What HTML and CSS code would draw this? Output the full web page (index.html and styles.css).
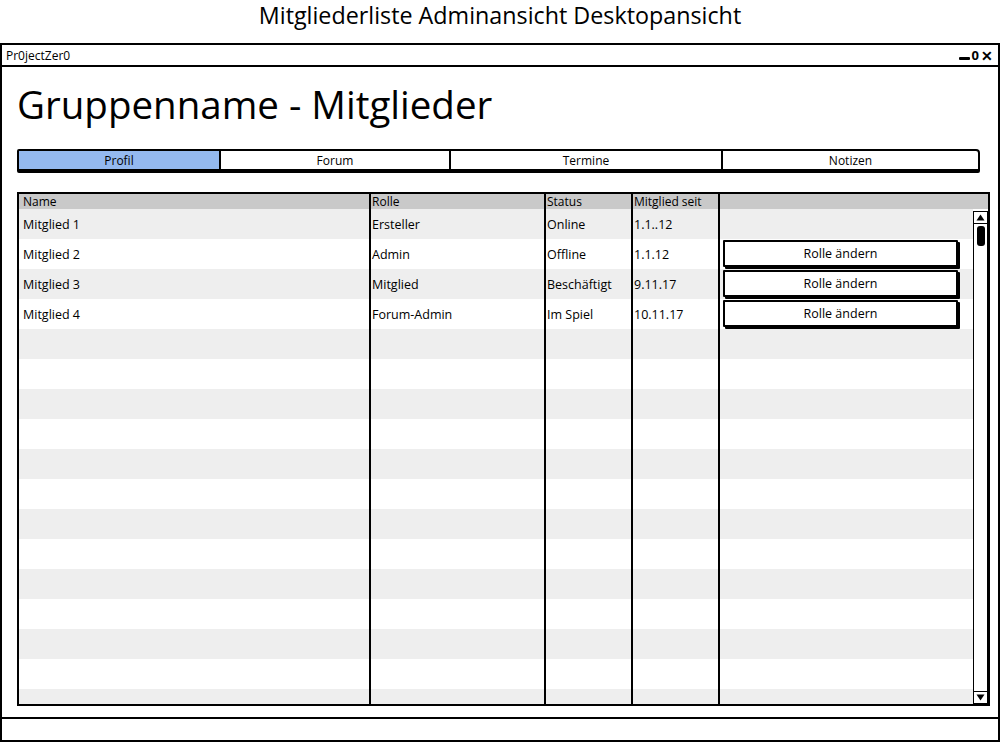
FILE: index.html
```html
<!DOCTYPE html>
<html lang="de">
<head>
<meta charset="utf-8">
<title>Mitgliederliste Adminansicht Desktopansicht</title>
<link rel="stylesheet" href="styles.css">
</head>
<body>
<div class="page-title">Mitgliederliste Adminansicht Desktopansicht</div>
<div class="window">
  <div class="titlebar">
    <span class="app-name">Pr0jectZer0</span>
    <span class="controls"><span class="ctl-min"></span><span class="ctl-max">0</span><span class="ctl-close">✕</span></span>
  </div>
  <div class="content">
    <h1 class="heading">Gruppenname - Mitglieder</h1>
    <div class="tabs">
      <div class="tab tab-active t1">Profil</div>
      <div class="tab t2">Forum</div>
      <div class="tab t3">Termine</div>
      <div class="tab t4">Notizen</div>
    </div>
    <div class="table">
      <div class="thead">
        <div class="th first">Name</div>
        <div class="th">Rolle</div>
        <div class="th">Status</div>
        <div class="th">Mitglied seit</div>
        <div class="th last"></div>
      </div>
      <div class="tbody">
        <div class="rows">
          <div class="row"><div class="td first">Mitglied 1</div><div class="td">Ersteller</div><div class="td">Online</div><div class="td">1.1..12</div><div class="td last"></div></div>
          <div class="row"><div class="td first">Mitglied 2</div><div class="td">Admin</div><div class="td">Offline</div><div class="td">1.1.12</div><div class="td last"><button class="btn">Rolle ändern</button></div></div>
          <div class="row"><div class="td first">Mitglied 3</div><div class="td">Mitglied</div><div class="td">Beschäftigt</div><div class="td">9.11.17</div><div class="td last"><button class="btn">Rolle ändern</button></div></div>
          <div class="row"><div class="td first">Mitglied 4</div><div class="td">Forum-Admin</div><div class="td">Im Spiel</div><div class="td">10.11.17</div><div class="td last"><button class="btn">Rolle ändern</button></div></div>
          <div class="row"><div class="td first"></div><div class="td"></div><div class="td"></div><div class="td"></div><div class="td last"></div></div>
          <div class="row"><div class="td first"></div><div class="td"></div><div class="td"></div><div class="td"></div><div class="td last"></div></div>
          <div class="row"><div class="td first"></div><div class="td"></div><div class="td"></div><div class="td"></div><div class="td last"></div></div>
          <div class="row"><div class="td first"></div><div class="td"></div><div class="td"></div><div class="td"></div><div class="td last"></div></div>
          <div class="row"><div class="td first"></div><div class="td"></div><div class="td"></div><div class="td"></div><div class="td last"></div></div>
          <div class="row"><div class="td first"></div><div class="td"></div><div class="td"></div><div class="td"></div><div class="td last"></div></div>
          <div class="row"><div class="td first"></div><div class="td"></div><div class="td"></div><div class="td"></div><div class="td last"></div></div>
          <div class="row"><div class="td first"></div><div class="td"></div><div class="td"></div><div class="td"></div><div class="td last"></div></div>
          <div class="row"><div class="td first"></div><div class="td"></div><div class="td"></div><div class="td"></div><div class="td last"></div></div>
          <div class="row"><div class="td first"></div><div class="td"></div><div class="td"></div><div class="td"></div><div class="td last"></div></div>
          <div class="row"><div class="td first"></div><div class="td"></div><div class="td"></div><div class="td"></div><div class="td last"></div></div>
          <div class="row"><div class="td first"></div><div class="td"></div><div class="td"></div><div class="td"></div><div class="td last"></div></div>
          <div class="row"><div class="td first"></div><div class="td"></div><div class="td"></div><div class="td"></div><div class="td last"></div></div>
        </div>
        <div class="scrollbar">
          <div class="sb-up"><svg width="9" height="7" viewBox="0 0 9 7"><path d="M0.5 6.5 L4.5 0.5 L8.5 6.5 Z" fill="#000"/></svg></div>
          <div class="sb-thumb"></div>
          <div class="sb-track"></div>
          <div class="sb-down"><svg width="9" height="7" viewBox="0 0 9 7"><path d="M0.5 0.5 L4.5 6.5 L8.5 0.5 Z" fill="#000"/></svg></div>
        </div>
      </div>
    </div>
  </div>
  <div class="statusbar"></div>
</div>
</body>
</html>
```
FILE: styles.css
```css
* { box-sizing: border-box; }
html, body { margin: 0; padding: 0; background: #fff; }
body {
  font-family: "Open Sans", "Liberation Sans", sans-serif;
  color: #000;
  width: 1000px;
  height: 742px;
  overflow: hidden;
}
.page-title {
  height: 43px;
  line-height: 30px;
  text-align: center;
  font-size: 23.3px;
}
.window {
  height: 699px;
  border: 2px solid #000;
  display: flex;
  flex-direction: column;
}
.titlebar {
  height: 22px;
  border-bottom: 2px solid #000;
  display: flex;
  align-items: center;
  justify-content: space-between;
  padding: 0 5px 0 4px;
}
.app-name { font-size: 12px; }
.controls { display: flex; align-items: center; gap: 2px; font-weight: bold; font-size: 13px; }
.ctl-min { width: 11px; height: 3px; background: #000; margin-top: 7px; border-radius: 1px; }
.ctl-max { font-size: 13px; }
.ctl-close { font-size: 14px; }
.content {
  flex: 1;
  padding: 14px 7px 0 15px;
  display: flex;
  flex-direction: column;
}
.heading {
  margin: 0 0 21px 0;
  height: 47px;
  line-height: 47px;
  font-size: 38.5px;
  font-weight: normal;
}
.tabs {
  display: flex;
  width: 963px;
  height: 24px;
  border: 2px solid #000;
  border-bottom-width: 4px;
  border-radius: 2px 4px 2px 2px;
}
.tab {
  display: flex;
  align-items: center;
  justify-content: center;
  font-size: 12px;
  border-right: 2px solid #000;
}
.tab:last-child { border-right: none; }
.t1 { width: 202px; }
.t2 { width: 230px; }
.t3 { width: 272px; }
.t4 { flex: 1; }
.tab-active { background: #94b9ef; }
.table {
  margin-top: 19px;
  width: 973px;
  height: 514px;
  border: 2px solid #000;
  display: flex;
  flex-direction: column;
}
.thead {
  display: grid;
  grid-template-columns: 352px 175px 87px 87px 1fr;
  height: 15px;
  background: #c9c9c9;
}
.th {
  font-size: 12px;
  line-height: 15px;
  padding-left: 1px;
  border-right: 2px solid #000;
}
.th.first { padding-left: 4px; }
.th.last { border-right: none; }
.tbody {
  flex: 1;
  display: flex;
  overflow: hidden;
}
.rows { flex: 1; overflow: hidden; }
.row {
  display: grid;
  grid-template-columns: 352px 175px 87px 87px 1fr;
  height: 30px;
}
.row:nth-child(odd) { background: #eeeeee; }
.td {
  font-size: 12.5px;
  line-height: 31px;
  padding-left: 1px;
  border-right: 2px solid #000;
}
.td.first { padding-left: 4px; }
.td.last { border-right: none; padding-left: 3px; display: flex; align-items: flex-start; }
.btn {
  margin-top: 1px;
  width: 235px;
  height: 27px;
  background: #fff;
  border: 2px solid #000;
  box-shadow: 2px 2px 0 #000;
  font-family: inherit;
  font-size: 12.5px;
  color: #000;
  padding: 0;
  border-radius: 1px;
}
.scrollbar {
  width: 15px;
  margin: 2px 0 0 0;
  border: 1px solid #000;
  display: flex;
  flex-direction: column;
  align-items: center;
  background: #fff;
}
.sb-up, .sb-down {
  width: 13px;
  height: 12px;
  display: flex;
  align-items: center;
  justify-content: center;
}
.sb-up { border-bottom: 1px solid #000; }
.sb-down { border-top: 1px solid #000; }
.sb-thumb {
  margin-top: 2px;
  width: 8px;
  height: 20px;
  background: #000;
  border-radius: 3px;
}
.sb-track { flex: 1; }
.statusbar {
  height: 23px;
  border-top: 2px solid #000;
  margin-top: 11px;
}
```
